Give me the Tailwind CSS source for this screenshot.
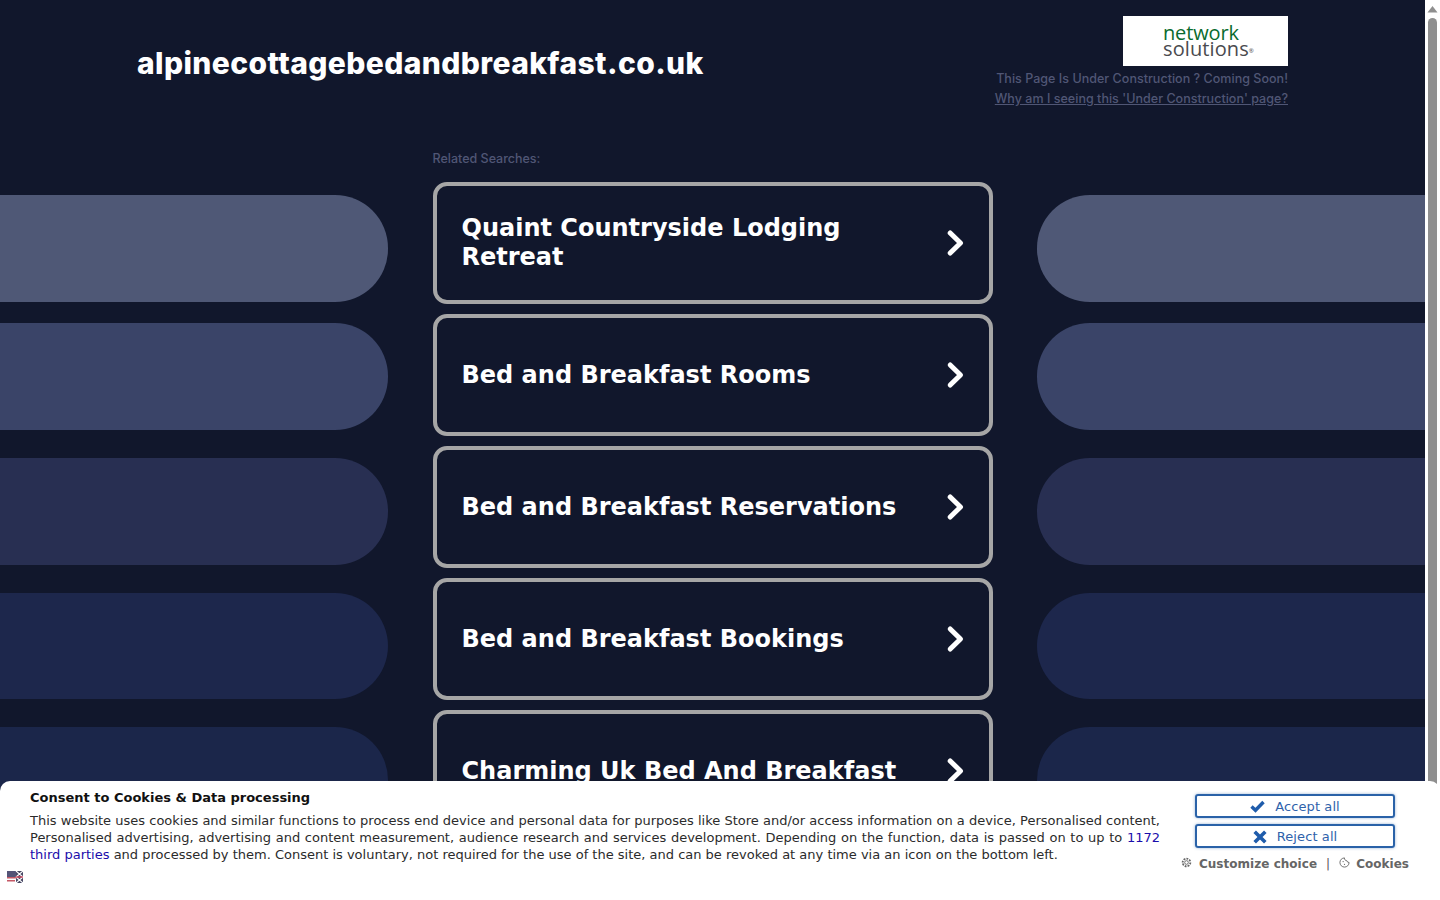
<!DOCTYPE html>
<html lang="en">
<head>
<meta charset="utf-8">
<title>alpinecottagebedandbreakfast.co.uk</title>
<script src="https://cdn.jsdelivr.net/npm/@tailwindcss/browser@4"></script>
</head>
<body class="bg-[#11172c] font-['DejaVu_Sans',sans-serif]">
<div class="relative h-[900px] w-[1440px] overflow-hidden">
  <div class="flex h-[900px] w-[1425px] flex-col overflow-hidden">
    <header class="flex h-[128px] shrink-0 justify-between pl-[137px] pr-[137px] pt-[16px]">
      <h1 class="pt-[27px] font-['Inter',sans-serif] text-[30px] leading-[40px] font-extrabold tracking-[0.4px] text-white">alpinecottagebedandbreakfast.co.uk</h1>
      <div class="flex flex-col items-end">
        <div class="flex h-[50px] w-[165px] flex-col items-start justify-center bg-white pl-[40px] font-['Open_Sans',sans-serif] text-[20px] leading-[16px]">
          <span class="tracking-[-0.15px] text-[#0a6b2e]">network</span>
          <span class="tracking-[0.1px] text-[#4a4a4e]">solutions<sup class="text-[6px]">®</sup></span>
        </div>
        <p class="mt-[3px] font-['Inter',sans-serif] text-[12.5px] leading-[20px] font-medium tracking-[0.03px] text-[#505675]">This Page Is Under Construction ? Coming Soon!</p>
        <a href="#" class="font-['Inter',sans-serif] text-[12.5px] leading-[20px] font-medium tracking-[0.03px] text-[#505675] underline">Why am I seeing this 'Under Construction' page?</a>
      </div>
    </header>
    <main class="flex justify-between">
      <div class="flex w-[388px] flex-col pt-[67px]">
        <div class="h-[107px] rounded-r-[53px] bg-[#4f5876]"></div>
        <div class="mt-[21px] h-[107px] rounded-r-[53px] bg-[#3a4468]"></div>
        <div class="mt-[28px] h-[107px] rounded-r-[53px] bg-[#282f52]"></div>
        <div class="mt-[28px] h-[106px] rounded-r-[53px] bg-[#1d274c]"></div>
        <div class="mt-[28px] h-[107px] rounded-r-[53px] bg-[#1b264a]"></div>
      </div>
      <div class="flex w-[560px] flex-col">
        <p class="h-[54px] pt-[22px] font-['Inter',sans-serif] text-[12.5px] leading-[18px] font-medium text-[#505675]">Related Searches:</p>
        <div class="flex flex-col gap-[10px]">
          <a href="#" class="flex h-[122px] items-center justify-between rounded-[14px] border-4 border-[#a6a6a6] pl-[25px] pr-[22px] text-[24px] leading-[29px] font-bold text-white">
            <span class="w-[440px]">Quaint Countryside Lodging Retreat</span>
            <svg class="h-[34px] w-[24px]" viewBox="0 0 24 34" fill="none" stroke="currentColor" stroke-width="5" stroke-linecap="round" stroke-linejoin="round"><path d="M7.2 7 L17.5 17 L7.2 27"/></svg>
          </a>
          <a href="#" class="flex h-[122px] items-center justify-between rounded-[14px] border-4 border-[#a6a6a6] pl-[25px] pr-[22px] text-[24px] leading-[29px] font-bold text-white">
            <span>Bed and Breakfast Rooms</span>
            <svg class="h-[34px] w-[24px]" viewBox="0 0 24 34" fill="none" stroke="currentColor" stroke-width="5" stroke-linecap="round" stroke-linejoin="round"><path d="M7.2 7 L17.5 17 L7.2 27"/></svg>
          </a>
          <a href="#" class="flex h-[122px] items-center justify-between rounded-[14px] border-4 border-[#a6a6a6] pl-[25px] pr-[22px] text-[24px] leading-[29px] font-bold text-white">
            <span>Bed and Breakfast Reservations</span>
            <svg class="h-[34px] w-[24px]" viewBox="0 0 24 34" fill="none" stroke="currentColor" stroke-width="5" stroke-linecap="round" stroke-linejoin="round"><path d="M7.2 7 L17.5 17 L7.2 27"/></svg>
          </a>
          <a href="#" class="flex h-[122px] items-center justify-between rounded-[14px] border-4 border-[#a6a6a6] pl-[25px] pr-[22px] text-[24px] leading-[29px] font-bold text-white">
            <span>Bed and Breakfast Bookings</span>
            <svg class="h-[34px] w-[24px]" viewBox="0 0 24 34" fill="none" stroke="currentColor" stroke-width="5" stroke-linecap="round" stroke-linejoin="round"><path d="M7.2 7 L17.5 17 L7.2 27"/></svg>
          </a>
          <a href="#" class="flex h-[122px] shrink-0 items-center justify-between rounded-[14px] border-4 border-[#a6a6a6] pl-[25px] pr-[22px] text-[24px] leading-[29px] font-bold text-white">
            <span>Charming Uk Bed And Breakfast</span>
            <svg class="h-[34px] w-[24px]" viewBox="0 0 24 34" fill="none" stroke="currentColor" stroke-width="5" stroke-linecap="round" stroke-linejoin="round"><path d="M7.2 7 L17.5 17 L7.2 27"/></svg>
          </a>
        </div>
      </div>
      <div class="flex w-[388px] flex-col pt-[67px]">
        <div class="h-[107px] rounded-l-[53px] bg-[#4f5876]"></div>
        <div class="mt-[21px] h-[107px] rounded-l-[53px] bg-[#3a4468]"></div>
        <div class="mt-[28px] h-[107px] rounded-l-[53px] bg-[#282f52]"></div>
        <div class="mt-[28px] h-[106px] rounded-l-[53px] bg-[#1d274c]"></div>
        <div class="mt-[28px] h-[107px] rounded-l-[53px] bg-[#1b264a]"></div>
      </div>
    </main>
  </div>

  <div class="absolute top-0 right-0 flex h-[900px] w-[15px] flex-col items-center bg-white">
    <svg class="mt-[5px] h-[8px] w-[11px]" viewBox="0 0 11 8"><path d="M5.5 1 L10.5 7.5 L0.5 7.5 Z" fill="#8f8f8f"/></svg>
    <div class="mt-[5px] h-[800px] w-[9px] rounded-t-[5px] bg-[#8f8f8f]"></div>
  </div>

  <section class="absolute bottom-0 left-0 flex h-[119px] w-[1440px] rounded-t-[10px] bg-white">
    <div class="relative w-[1160px] pl-[30px] pt-[9px]">
      <h2 class="text-[13px] leading-[16px] font-bold text-[#111]">Consent to Cookies &amp; Data processing</h2>
      <p class="mt-[6px] text-justify text-[13px] leading-[17px] text-[#2b2b2b]">This website uses cookies and similar functions to process end device and personal data for purposes like Store and/or access information on a device, Personalised content, Personalised advertising, advertising and content measurement, audience research and services development. Depending on the function, data is passed on to up to <a href="#" class="text-[#1a0dab]">1172 third parties</a> and processed by them. Consent is voluntary, not required for the use of the site, and can be revoked at any time via an icon on the bottom left.</p>
      <svg class="absolute bottom-[17px] left-[7px] h-[12px] w-[16px] opacity-75" viewBox="0 0 16 12">
        <rect width="16" height="12" fill="#fff"/>
        <rect x="0" y="0" width="8" height="1.5" fill="#b22234"/><rect x="0" y="3" width="8" height="1.5" fill="#b22234"/><rect x="0" y="6" width="16" height="1.5" fill="#b22234"/><rect x="0" y="9" width="8" height="1.5" fill="#b22234"/>
        <rect x="0" y="0" width="9" height="6" fill="#1c1c4a"/>
        <rect x="9" y="0" width="7" height="12" fill="#0a0a30"/>
        <path d="M9 0 L16 6 M16 0 L9 6 M9 6 L16 12 M16 6 L9 12" stroke="#fff" stroke-width="1.1"/>
        <path d="M9 6 H16" stroke="#c8102e" stroke-width="1.4"/>
      </svg>
    </div>
    <div class="flex w-[280px] flex-col items-center pt-[13px]">
      <button class="ml-[-10px] flex h-[24px] w-[200px] items-center justify-center gap-[10px] rounded-[3px] border-2 border-[#2a62a8] pt-[1px] text-[13px] leading-[16px] tracking-[0.1px] text-[#2f62ab] shadow-[0_0_3px_rgba(42,98,168,0.5)]">
        <svg class="h-[13px] w-[15px]" viewBox="0 0 15 13"><path d="M1.5 6.5 L5.5 10.3 L13.5 2" fill="none" stroke="#1f5cab" stroke-width="3.4"/></svg>
        <span>Accept all</span>
      </button>
      <button class="ml-[-10px] mt-[6px] flex h-[24px] w-[200px] items-center justify-center gap-[10px] rounded-[3px] border-2 border-[#2a62a8] pt-[1px] text-[13px] leading-[16px] tracking-[0.1px] text-[#2f62ab] shadow-[0_0_3px_rgba(42,98,168,0.5)]">
        <svg class="h-[14px] w-[14px]" viewBox="0 0 14 14"><path d="M1.7 1.7 L12.3 12.3 M12.3 1.7 L1.7 12.3" fill="none" stroke="#1f5cab" stroke-width="3.6"/></svg>
        <span>Reject all</span>
      </button>
      <div class="ml-[-10px] mt-[8px] flex items-center text-[12px] leading-[16px] font-bold tracking-[0.03px] text-[#666]">
        <svg class="mr-[7px] mb-[3px] h-[11px] w-[11px]" viewBox="0 0 12 12" fill="none" stroke="#666" stroke-width="1"><circle cx="6" cy="6" r="2"/><circle cx="6" cy="6" r="4.2" stroke-dasharray="2 1.2" stroke-width="2"/></svg>
        <span>Customize choice</span>
        <span class="mx-[9px] font-normal text-[#555]">|</span>
        <svg class="mr-[6px] mb-[3px] h-[11px] w-[11px]" viewBox="0 0 12 12" fill="none" stroke="#666" stroke-width="1"><path d="M6 1 A5 5 0 1 0 11 6 A2.5 2.5 0 0 1 8.5 4 A2.5 2.5 0 0 1 6 1 Z"/><circle cx="4.5" cy="5" r="0.7" fill="#666" stroke="none"/><circle cx="6" cy="8" r="0.7" fill="#666" stroke="none"/></svg>
        <span>Cookies</span>
      </div>
    </div>
  </section>
</div>
</body>
</html>
